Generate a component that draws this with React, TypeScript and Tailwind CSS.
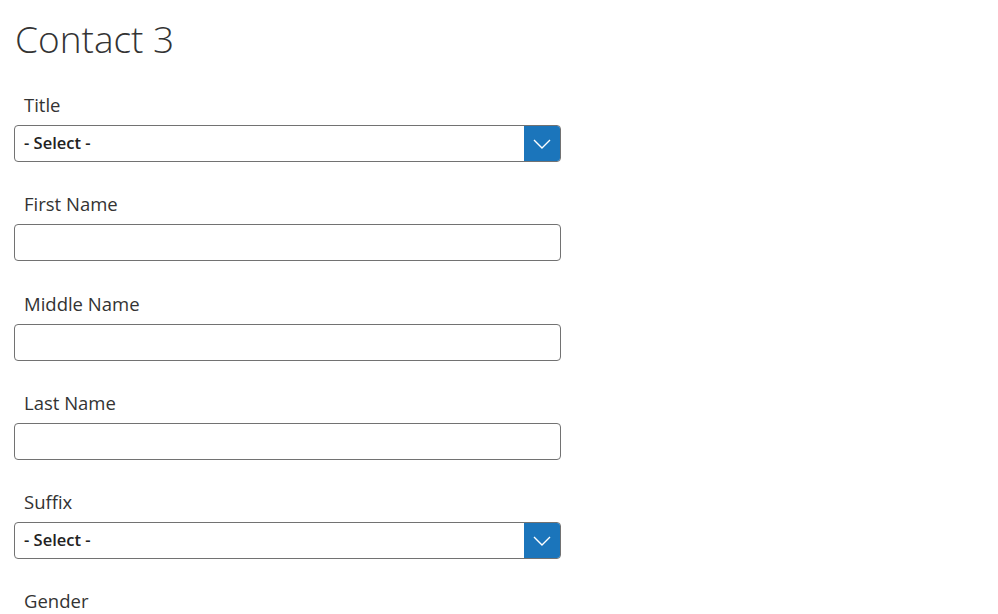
function Label({ children }: { children: string }) {
  return (
    <label className="block pl-[10px] text-[18.5px] leading-[27px] text-[#333] mb-[7px]">
      {children}
    </label>
  );
}

function Chevron() {
  return (
    <svg width="18" height="10" viewBox="0 0 18 10" fill="none">
      <polyline points="1,1 9,9 17,1" stroke="white" strokeWidth="1.4" />
    </svg>
  );
}

function SelectField({ label }: { label: string }) {
  return (
    <div className="mb-[28.25px]">
      <Label>{label}</Label>
      <div className="flex h-[37px] w-[547px] rounded-[4px] border border-[#727272] bg-white overflow-hidden">
        <div className="flex-1 flex items-center pl-[9px] text-[16.5px] font-semibold text-[#222]">
          - Select -
        </div>
        <div className="w-[36px] flex items-center justify-center bg-[#1b75bb]">
          <Chevron />
        </div>
      </div>
    </div>
  );
}

function TextField({ label }: { label: string }) {
  return (
    <div className="mb-[28.25px]">
      <Label>{label}</Label>
      <input
        type="text"
        className="block h-[37px] w-[547px] rounded-[4px] border border-[#727272] bg-white px-[9px] text-[16px] outline-none"
      />
    </div>
  );
}

export default function App() {
  return (
    <div className="min-h-screen bg-white px-[14px] pt-[13px] font-['Open_Sans',sans-serif] text-[#333]">
      <h1 className="pl-[1px] text-[37px] font-light leading-[52px] text-[#333] mb-[26px]">
        Contact 3
      </h1>
      <SelectField label="Title" />
      <TextField label="First Name" />
      <TextField label="Middle Name" />
      <TextField label="Last Name" />
      <SelectField label="Suffix" />
      <Label>Gender</Label>
    </div>
  );
}
